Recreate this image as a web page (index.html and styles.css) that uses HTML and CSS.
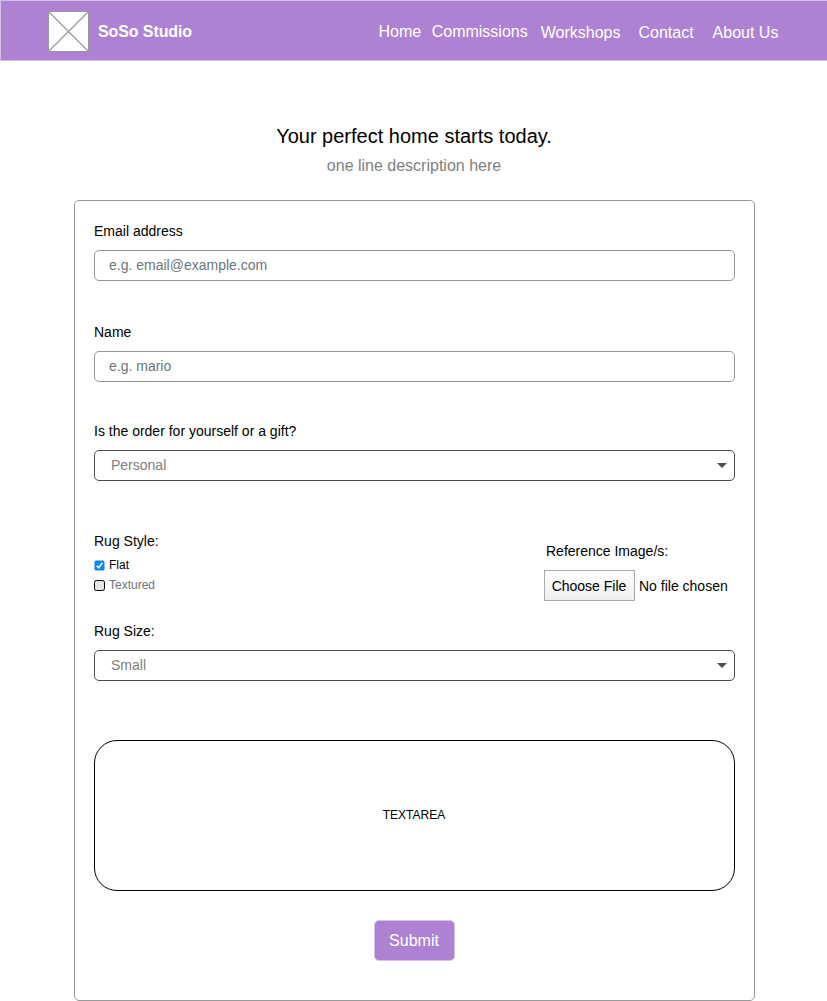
FILE: index.html
```html
<!DOCTYPE html>
<html lang="en">
<head>
<meta charset="utf-8">
<title>SoSo Studio</title>
<link rel="stylesheet" href="styles.css">
</head>
<body>
<header class="navbar">
  <a class="brand">
    <svg class="logo" width="41" height="41" viewBox="0 0 41 41"><rect x=".5" y=".5" width="40" height="40" rx="1" fill="#fff" stroke="#999"/><path d="M.5 .5l40 40M40.500 .5l-40 40" fill="none" stroke="#999" stroke-width="1.200"/></svg>
    <span class="brand-name">SoSo Studio</span>
  </a>
  <nav class="links">
    <a>Home</a>
    <a class="commissions">Commissions</a>
    <a class="workshops low">Workshops</a>
    <a class="contact low">Contact</a>
    <a class="about low">About Us</a>
  </nav>
</header>
<main>
  <h1 class="title">Your perfect home starts today.</h1>
  <p class="subtitle">one line description here</p>
  <form class="card">
    <label class="label" for="email">Email address</label>
    <input class="field" id="email" type="text" placeholder="e.g. email@example.com">
    <label class="label name-label" for="name">Name</label>
    <input class="field" id="name" type="text" placeholder="e.g. mario">
    <div class="label order-label">Is the order for yourself or a gift?</div>
    <div class="select"><span>Personal</span><svg width="10" height="5" viewBox="0 0 10 5"><path d="M0 0h10L5 5z" fill="#495057"/></svg></div>
    <div class="options">
      <div class="style-group">
        <div class="label">Rug Style:</div>
        <div class="check">
          <svg width="11" height="11" viewBox="0 0 11 11"><rect x=".5" y=".5" width="10" height="10" rx="1.500" fill="#0a84ff"/><path d="M2.700 5.700l2 2.100 3.700-5" fill="none" stroke="#fff" stroke-width="1.600"/></svg>
          <span>Flat</span>
        </div>
        <div class="check muted">
          <svg width="11" height="11" viewBox="0 0 11 11"><rect x=".5" y=".5" width="10" height="10" rx="2" fill="#e6e6e6" stroke="#000"/></svg>
          <span>Textured</span>
        </div>
      </div>
      <div class="file-group">
        <div class="label file-label">Reference Image/s:</div>
        <div class="file"><button class="choose" type="button">Choose File</button><span>No file chosen</span></div>
      </div>
    </div>
    <div class="label size-label">Rug Size:</div>
    <div class="select"><span>Small</span><svg width="10" height="5" viewBox="0 0 10 5"><path d="M0 0h10L5 5z" fill="#495057"/></svg></div>
    <div class="textarea">TEXTAREA</div>
    <button class="submit" type="button">Submit</button>
  </form>
</main>
</body>
</html>
```
FILE: styles.css
```css
* { box-sizing: border-box; }
body {
  margin: 0;
  background: #fff;
  color: #000;
  font-family: "Liberation Sans", Arial, sans-serif;
  font-size: 14px;
}
svg { display: block; flex: none; }
.navbar {
  display: flex;
  justify-content: space-between;
  height: 61px;
  padding: 10px 0 0 47px;
  background: #ae82d2;
  border: 1px solid #d5c0e6;
  border-right: 0;
  color: #fff;
  font-size: 16px;
}
.brand { display: flex; gap: 9px; }
.brand-name { font-weight: bold; line-height: 42px; letter-spacing: -0.1px; }
.links { display: flex; width: 448.5px; line-height: 42px; white-space: nowrap; }
.commissions { margin-left: 10.5px; }
.workshops { margin-left: 13px; }
.contact { margin-left: 18px; }
.about { margin-left: 19px; }
.low { padding-top: 1px; }
.title {
  margin: 63px 0 0;
  padding-left: 1px;
  font-size: 20px;
  font-weight: normal;
  line-height: 24px;
  text-align: center;
}
.subtitle {
  margin: 8px 0 0;
  padding-left: 1px;
  color: #808080;
  font-size: 16px;
  line-height: 20px;
  text-align: center;
}
.card {
  display: flex;
  flex-direction: column;
  width: 681px;
  height: 801px;
  margin: 24px 0 0 74px;
  padding: 20px 19px 0;
  border: 1px solid #999;
  border-radius: 5px;
}
.label { display: block; line-height: 20px; }
.field, .select {
  flex: none;
  width: 100%;
  height: 31px;
  margin: 9px 0 0;
  border: 1px solid #999;
  border-radius: 5px;
  background: #fff;
}
.field { padding: 0 14px 2px; font: 14px "Liberation Sans", Arial, sans-serif; outline: none; }
.field::placeholder { color: #6c757d; opacity: 1; }
.name-label { margin-top: 41px; }
.order-label { margin-top: 39px; }
.select {
  display: flex;
  align-items: center;
  justify-content: space-between;
  padding: 0 7px 0 16px;
  border-color: #4d4d4d;
  color: #808080;
}
.select span { padding-bottom: 2px; }
.options { display: flex; justify-content: space-between; height: 90px; margin-top: 50px; }
.check { display: flex; align-items: center; gap: 4px; height: 20px; font-size: 12px; }
.style-group .label { margin-bottom: 4px; }
.muted { color: #6c757d; }
.file-group { width: 191px; padding-top: 10px; }
.file-label { padding-left: 2px; }
.file { display: flex; align-items: center; gap: 4px; margin-top: 9px; white-space: nowrap; }
.choose {
  width: 91px;
  height: 31px;
  padding: 0 1px 0 0;
  border: 1px solid #aaa;
  background: linear-gradient(#fff, #eee);
  color: #000;
  font: 14px "Liberation Sans", Arial, sans-serif;
}
.textarea {
  display: flex;
  flex: none;
  align-items: center;
  justify-content: center;
  height: 151px;
  margin-top: 59px;
  padding: 0 1px 2px 0;
  border: 1px solid #000;
  border-radius: 23px;
  font-size: 12px;
}
.submit {
  align-self: center;
  width: 81px;
  height: 41px;
  margin-top: 29px;
  padding: 0 1px 0 0;
  border: 1px solid #d5c0e6;
  border-radius: 5px;
  background: #ae82d2;
  color: #fff;
  font: 16px "Liberation Sans", Arial, sans-serif;
}
```
